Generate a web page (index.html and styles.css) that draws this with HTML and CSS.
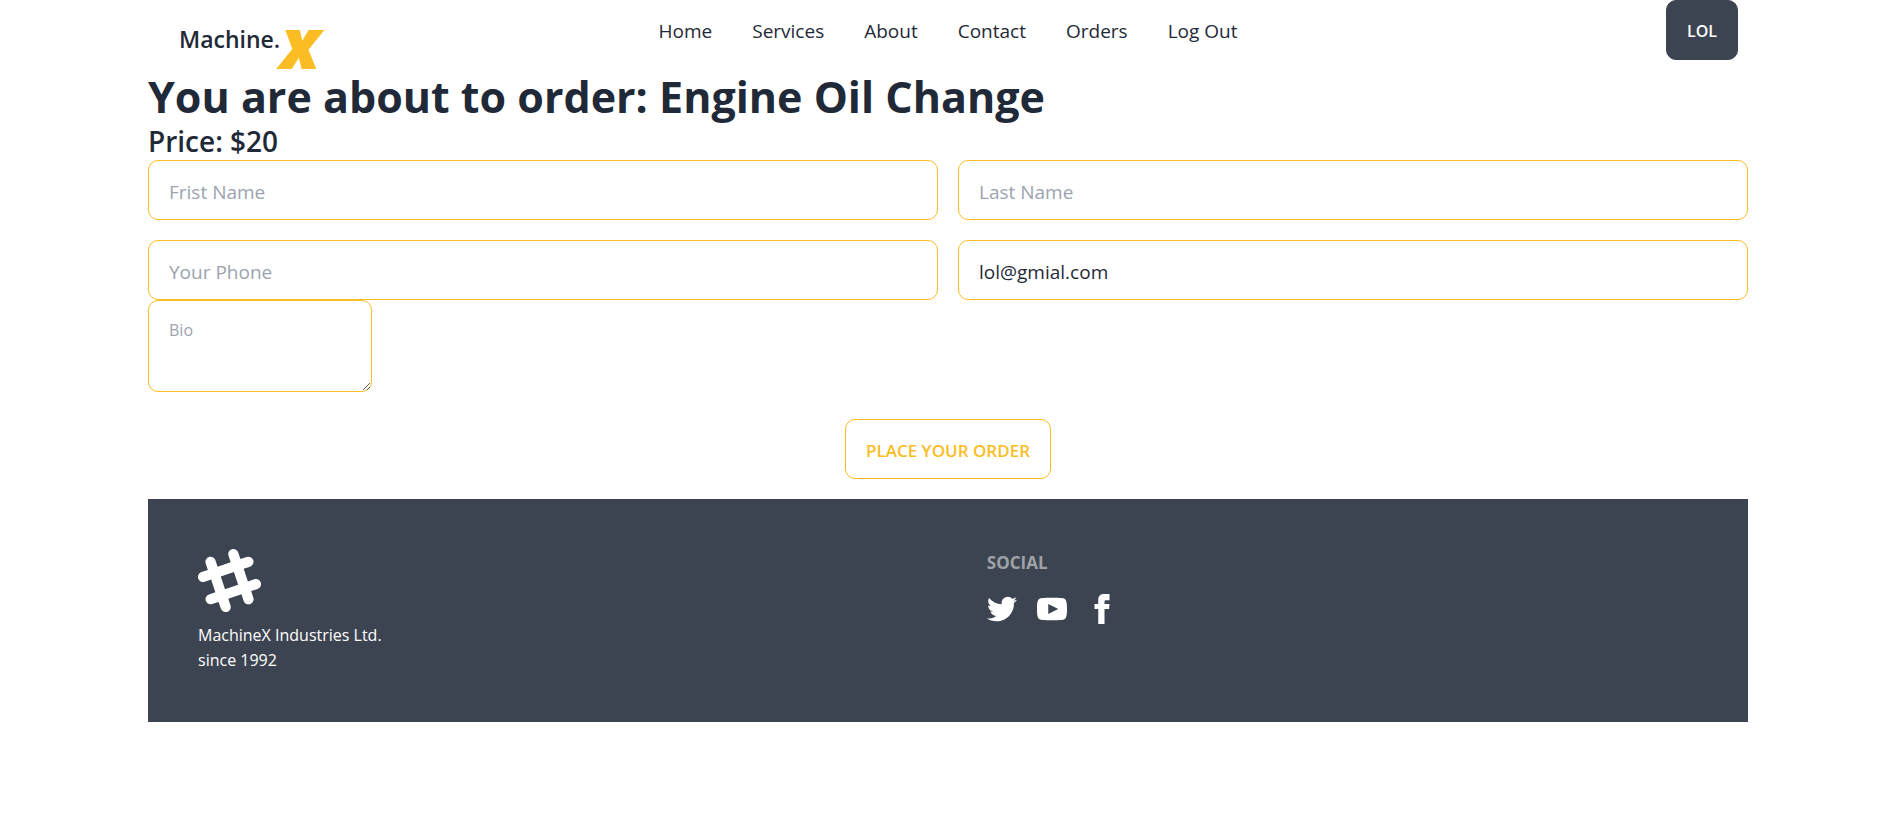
FILE: index.html
```html
<!DOCTYPE html>
<html lang="en">
<head>
<meta charset="utf-8">
<meta name="viewport" content="width=device-width, initial-scale=1">
<title>Machine.x</title>
<link rel="stylesheet" href="styles.css">
</head>
<body>
<div class="container">
  <header class="navbar">
    <a class="logo" href="#"><span class="logo-name">Machine.</span><span class="logo-x">x</span></a>
    <nav class="menu">
      <a href="#">Home</a>
      <a href="#">Services</a>
      <a href="#">About</a>
      <a href="#">Contact</a>
      <a href="#">Orders</a>
      <a href="#">Log Out</a>
    </nav>
    <div class="navbar-end"><button class="btn btn-neutral" type="button">LOL</button></div>
  </header>
  <main>
    <form class="order">
      <h1 class="title">You are about to order: Engine Oil Change</h1>
      <h2 class="price">Price: $20</h2>
      <div class="fields">
        <input class="field" type="text" placeholder="Frist Name" aria-label="First name">
        <input class="field" type="text" placeholder="Last Name" aria-label="Last name">
        <input class="field" type="text" placeholder="Your Phone" aria-label="Your phone">
        <input class="field" type="email" value="lol@gmial.com" aria-label="Email">
      </div>
      <textarea class="bio" placeholder="Bio" aria-label="Bio"></textarea>
      <div class="actions"><button class="btn btn-outline" type="submit">PLACE YOUR ORDER</button></div>
    </form>
  </main>
  <footer class="footer">
    <div class="footer-col">
      <svg class="mark" viewBox="0 0 24 24" aria-hidden="true"><path fill-rule="evenodd" d="M22.672 15.226l-2.432.811.841 2.515c.33 1.019-.209 2.127-1.23 2.456-1.15.325-2.148-.321-2.463-1.226l-.84-2.518-5.013 1.677.84 2.517c.391 1.203-.434 2.542-1.831 2.542-.88 0-1.601-.564-1.86-1.314l-.842-2.516-2.431.809c-1.135.328-2.145-.317-2.463-1.229-.329-1.018.211-2.127 1.231-2.456l2.432-.809-1.621-4.823-2.432.808c-1.355.384-2.558-.59-2.558-1.839 0-.817.509-1.582 1.327-1.846l2.433-.809-.842-2.515c-.33-1.02.211-2.129 1.232-2.458 1.02-.329 2.13.209 2.461 1.229l.842 2.515 5.011-1.677-.839-2.517c-.403-1.238.484-2.553 1.843-2.553.819 0 1.585.509 1.85 1.326l.841 2.517 2.431-.81c1.02-.33 2.131.211 2.461 1.229.332 1.018-.21 2.126-1.23 2.456l-2.433.809 1.622 4.823 2.433-.809c1.242-.401 2.557.484 2.557 1.838 0 .819-.51 1.583-1.328 1.847m-8.992-6.428l-5.01 1.675 1.619 4.828 5.011-1.674-1.62-4.829z"/></svg>
      <p class="company">MachineX Industries Ltd.<br>since 1992</p>
    </div>
    <div class="footer-col">
      <h3 class="footer-title">SOCIAL</h3>
      <div class="social">
        <a href="#" aria-label="Twitter"><svg viewBox="0 0 24 24"><path d="M24 4.557c-.883.392-1.832.656-2.828.775 1.017-.609 1.798-1.574 2.165-2.724-.951.564-2.005.974-3.127 1.195-.897-.957-2.178-1.555-3.594-1.555-3.179 0-5.515 2.966-4.797 6.045-4.091-.205-7.719-2.165-10.148-5.144-1.29 2.213-.669 5.108 1.523 6.574-.806-.026-1.566-.247-2.229-.616-.054 2.281 1.581 4.415 3.949 4.89-.693.188-1.452.232-2.224.084.626 1.956 2.444 3.379 4.6 3.419-2.07 1.623-4.678 2.348-7.29 2.04 2.179 1.397 4.768 2.212 7.548 2.212 9.142 0 14.307-7.721 13.995-14.646.962-.695 1.797-1.562 2.457-2.549z"/></svg></a>
        <a href="#" aria-label="YouTube"><svg viewBox="0 0 24 24"><path d="M19.615 3.184c-3.604-.246-11.631-.245-15.23 0-3.897.266-4.356 2.62-4.385 8.816.029 6.185.484 8.549 4.385 8.816 3.6.245 11.626.246 15.23 0 3.897-.266 4.356-2.62 4.385-8.816-.029-6.185-.484-8.549-4.385-8.816zm-10.615 12.816v-8l8 3.993-8 4.007z"/></svg></a>
        <a href="#" aria-label="Facebook"><svg viewBox="0 0 24 24"><path d="M9 8h-3v4h3v12h5v-12h3.642l.358-4h-4v-1.667c0-.955.192-1.333 1.115-1.333h2.885v-5h-3.808c-3.596 0-5.192 1.583-5.192 4.615v3.385z"/></svg></a>
      </div>
    </div>
  </footer>
</div>
</body>
</html>
```
FILE: styles.css
```css
*, *::before, *::after { box-sizing: border-box; }
body {
  margin: 0;
  padding-right: 6px;
  background: #fff;
  color: #1f2937;
  font-family: "Open Sans", "Noto Sans", sans-serif;
  font-size: 19px;
}
a { color: inherit; text-decoration: none; }
h1, h2, h3, p { margin: 0; }
.container { max-width: 1600px; margin: 0 auto; }

.navbar {
  display: grid;
  grid-template-columns: 1fr auto 1fr;
  align-items: start;
}
.logo { display: flex; align-items: flex-start; padding: 12px 0 0 31px; }
.logo-name { padding-top: 10px; font-size: 23px; font-weight: 600; line-height: 35px; }
.logo-x { color: #fbbd23; font-size: 70px; font-weight: 800; font-style: italic; line-height: 60px; }
.menu { display: flex; gap: 40px; padding-top: 16px; line-height: 30px; }
.navbar-end { display: flex; justify-content: flex-end; padding-right: 10px; }

.btn {
  height: 60px;
  padding: 2px 20px 0;
  border: 1px solid;
  border-radius: 10px;
  font: 600 16px "Open Sans", "Noto Sans", sans-serif;
  cursor: pointer;
}
.btn-neutral { background: #3d4451; border-color: #3d4451; color: #fff; }
.btn-outline { background: transparent; border-color: #fbbd23; color: #fbbd23; font-size: 17px; }

.title { font-size: 43px; font-weight: 700; line-height: 50px; }
.price { font-size: 28px; font-weight: 600; line-height: 38px; }
.fields { display: grid; grid-template-columns: 1fr 1fr; gap: 20px; }
.field, .bio {
  border: 1px solid #fbbd23;
  border-radius: 10px;
  background: #fff;
  color: inherit;
  font-family: inherit;
}
.field { min-width: 0; height: 60px; padding: 4px 20px 0; font-size: 19px; }
.bio { display: block; width: 224px; height: 92px; padding: 17px 20px; font-size: 16px; line-height: 25px; }
.field::placeholder, .bio::placeholder { color: #9ca3af; opacity: 1; }
.actions { display: flex; justify-content: center; padding: 27px 0 20px; }

.footer {
  display: grid;
  grid-template-columns: auto auto;
  column-gap: 24px;
  padding: 50px;
  background: #3d4451;
  color: #fff;
  font-size: 16px;
  line-height: 25px;
}
.mark { display: block; width: 63px; height: 63px; margin-bottom: 11px; fill: #fff; }
.company { margin-bottom: -1px; }
.footer-title { padding-top: 1px; margin-bottom: 19px; color: #9ea2a8; font-size: 17px; font-weight: 700; }
.social { display: flex; gap: 20px; }
.social svg { display: block; width: 30px; height: 30px; fill: #fff; }
```
